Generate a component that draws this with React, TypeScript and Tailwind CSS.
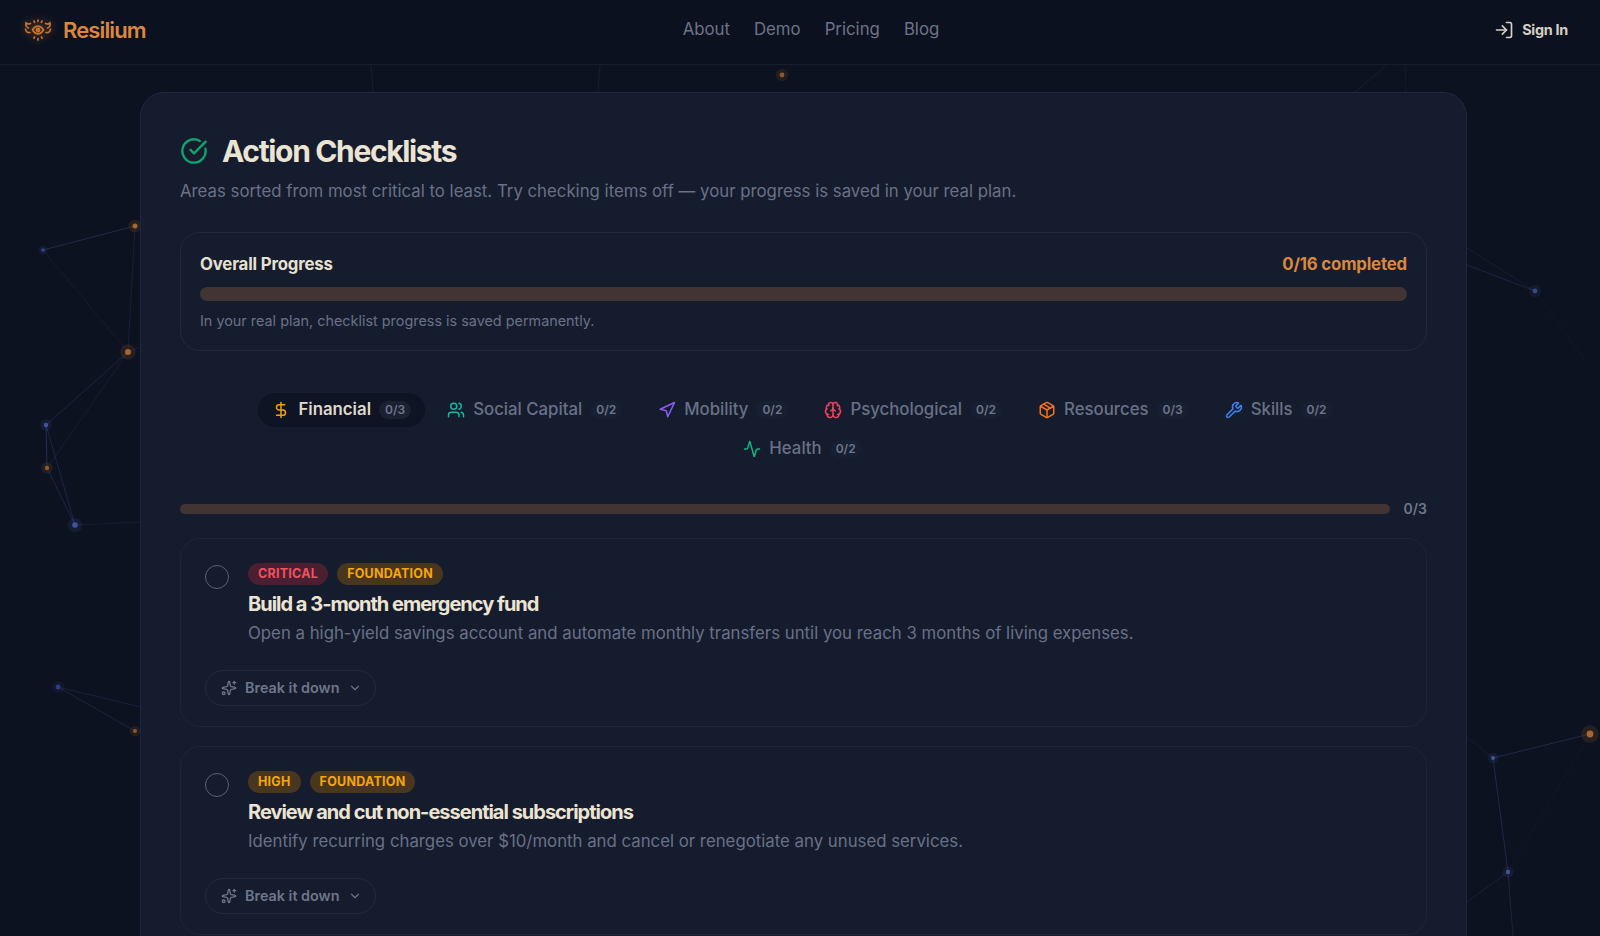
import { Activity, Brain, ChevronDown, CircleCheckBig, DollarSign, LogIn, Navigation, Package, Sparkles, Users, Wrench } from "lucide-react"

const nodes = [
  { x: 135, y: 226, r: 2.5, c: "#c2702f" },
  { x: 43, y: 250, r: 1.8, c: "#3f4f95" },
  { x: 128, y: 352, r: 3, c: "#c2702f" },
  { x: 46, y: 425, r: 2.2, c: "#4a5cab" },
  { x: 47, y: 468, r: 2.2, c: "#a5602c" },
  { x: 75, y: 525, r: 2.8, c: "#4a5cab" },
  { x: 58, y: 687, r: 2.4, c: "#36458c" },
  { x: 135, y: 731, r: 2, c: "#a5602c" },
  { x: 782, y: 75, r: 2.4, c: "#a5602c" },
  { x: 1535, y: 291, r: 2.4, c: "#3f4f95" },
  { x: 1590, y: 734, r: 3.4, c: "#c2702f" },
  { x: 1493, y: 758, r: 2, c: "#4a5cab" },
  { x: 1508, y: 872, r: 2.2, c: "#4a5cab" },
]

const lines = [
  [43, 250, 135, 226, 0.5],
  [135, 226, 128, 352, 0.3],
  [43, 250, 128, 352, 0.25],
  [128, 352, 46, 425, 0.4],
  [128, 352, 47, 468, 0.25],
  [46, 425, 47, 468, 0.6],
  [46, 425, 75, 525, 0.45],
  [47, 468, 75, 525, 0.45],
  [75, 525, 140, 522, 0.25],
  [128, 352, 140, 347, 0.3],
  [58, 687, 140, 707, 0.3],
  [58, 687, 135, 731, 0.4],
  [1493, 758, 1590, 734, 0.5],
  [1493, 758, 1508, 872, 0.5],
  [1508, 872, 1513, 936, 0.4],
  [1508, 872, 1467, 902, 0.3],
  [1493, 758, 1467, 737, 0.2],
  [1508, 872, 1590, 734, 0.12],
  [1467, 265, 1535, 291, 0.4],
  [1467, 248, 1535, 291, 0.25],
  [1535, 291, 1585, 360, 0.12],
  [371, 65, 373, 92, 0.25],
  [600, 65, 598, 92, 0.25],
  [1387, 65, 1355, 92, 0.25],
  [1405, 65, 1406, 92, 0.18],
]

const tabs = [
  { name: "Financial", count: "0/3", icon: DollarSign, color: "text-[#f59e0b]" },
  { name: "Social Capital", count: "0/2", icon: Users, color: "text-[#14b8a6]" },
  { name: "Mobility", count: "0/2", icon: Navigation, color: "text-[#8b5cf6]" },
  { name: "Psychological", count: "0/2", icon: Brain, color: "text-[#f43f5e]" },
  { name: "Resources", count: "0/3", icon: Package, color: "text-[#f97316]" },
  { name: "Skills", count: "0/2", icon: Wrench, color: "text-[#3b82f6]" },
  { name: "Health", count: "0/2", icon: Activity, color: "text-[#10b981]" },
]

const items = [
  {
    badges: [
      { label: "CRITICAL", className: "bg-[#4b1f32] text-[#f0525f]" },
      { label: "FOUNDATION", className: "bg-[#49361f] text-[#f5a70b]" },
    ],
    title: "Build a 3-month emergency fund",
    desc: "Open a high-yield savings account and automate monthly transfers until you reach 3 months of living expenses.",
  },
  {
    badges: [
      { label: "HIGH", className: "bg-[#49361f] text-[#f5a70b]" },
      { label: "FOUNDATION", className: "bg-[#49361f] text-[#f5a70b]" },
    ],
    title: "Review and cut non-essential subscriptions",
    desc: "Identify recurring charges over $10/month and cancel or renegotiate any unused services.",
  },
]

function Network() {
  return (
    <svg className="absolute inset-0" width="1600" height="936" viewBox="0 0 1600 936" fill="none">
      {lines.map((l, i) => (
        <line key={i} x1={l[0]} y1={l[1]} x2={l[2]} y2={l[3]} stroke="#33416f" strokeWidth="1" opacity={l[4]} />
      ))}
      {nodes.map((n, i) => (
        <g key={i}>
          <circle cx={n.x} cy={n.y} r={n.r * 2.6} fill={n.c} opacity="0.14" />
          <circle cx={n.x} cy={n.y} r={n.r} fill={n.c} opacity="0.85" />
        </g>
      ))}
    </svg>
  )
}

function Logo() {
  return (
    <svg className="drop-shadow-[0_0_5px_rgba(220,135,61,0.45)]" width="28" height="22" viewBox="0 0 28 22" fill="none" stroke="#c9702f" strokeWidth="1.7" strokeLinecap="round">
      <circle cx="14" cy="11" r="1.6" fill="#c9702f" />
      <path d="M8.500 11c1.600-2.600 3.400-3.800 5.500-3.800s3.900 1.200 5.500 3.800c-1.600 2.600-3.400 3.800-5.500 3.800s-3.900-1.200-5.500-3.800z" />
      <path d="M6.500 4.500c-1.600.8-3.300.5-4.500-.5-.5 2.500.4 4.300 2.500 5M1.500 10c.2 2.500 2 4 4.500 3.500" />
      <path d="M21.500 4.500c1.600.8 3.300.5 4.500-.5.500 2.500-.4 4.300-2.500 5M26.500 10c-.2 2.500-2 4-4.500 3.500" />
      <path d="M14 1v1.500M10 2l.6 1.300M18 2l-.6 1.300M14 19.500V21M10.500 18l-.5 1.300M17.500 18l.5 1.300" />
    </svg>
  )
}

function ItemCard({ item }: { item: (typeof items)[number] }) {
  return (
    <div className="h-[189px] rounded-[20px] border border-[#1d2538] pt-6 pb-5 pl-6">
      <div className="flex gap-[19px]">
        <div className="mt-[2px] h-6 w-6 shrink-0 rounded-full border border-[#5a6274]" />
        <div className="min-w-0">
          <div className="flex gap-[9px]">
            {item.badges.map((b) => (
              <span key={b.label} className={`flex h-[22px] items-center rounded-full px-[10px] text-[12.5px] font-bold tracking-[0.02em] ${b.className}`}>
                {b.label}
              </span>
            ))}
          </div>
          <h3 className="mt-[6px] text-xl leading-[27px] font-bold tracking-[-0.05em] text-[#ebe4d3]">{item.title}</h3>
          <p className="mt-[2px] text-[16.8px] leading-[27px] text-[#697186]">{item.desc}</p>
        </div>
      </div>
      <button className="mt-[23px] flex h-9 w-[171px] items-center gap-2 rounded-full border border-[#232b3e] pl-[15px] text-[14.4px] font-semibold text-[#6f7689]">
        <Sparkles className="h-4 w-4 shrink-0" />
        Break it down
        <ChevronDown className="h-[14px] w-[14px] shrink-0" />
      </button>
    </div>
  )
}

export default function App() {
  return (
    <div className="relative h-[936px] overflow-hidden bg-[#0c1220] font-['Inter',sans-serif]">
      <Network />

      <header className="relative flex h-[65px] items-center justify-between border-b border-[#171d2c] bg-[#0c111f] pr-8 pb-1 pl-6">
        <div className="flex items-center gap-[11px]">
          <Logo />
          <span className="text-[22px] font-semibold tracking-[-0.04em] text-[#dc873d]">Resilium</span>
        </div>
        <nav className="mr-[18px] flex items-center gap-6 text-[16.8px] text-[#6c7388]">
          <a>About</a>
          <a>Demo</a>
          <a>Pricing</a>
          <a>Blog</a>
        </nav>
        <button className="flex items-center gap-2 text-[14.4px] font-bold tracking-[-0.02em] text-[#d6d0c3]">
          <LogIn className="h-5 w-5" />
          Sign In
        </button>
      </header>

      <main className="relative mt-[27px] ml-[140px] h-[1000px] w-[1327px] rounded-[24px] border border-[#1f2840] bg-[#151c2e] px-[39px] pt-10">
        <div className="flex items-center gap-[14px]">
          <CircleCheckBig className="h-7 w-7 text-[#10a56f]" />
          <h1 className="text-[30px] leading-9 font-bold tracking-[-0.045em] text-[#ebe4d3]">Action Checklists</h1>
        </div>
        <p className="mt-[10px] text-[16.8px] leading-6 text-[#697186]">
          Areas sorted from most critical to least. Try checking items off — your progress is saved in your real plan.
        </p>

        <section className="mt-[29px] h-[119px] rounded-[20px] border border-[#212a3d] px-[19px] pt-5">
          <div className="flex items-center justify-between text-[16.8px] leading-[22px] font-bold tracking-[-0.01em]">
            <span className="text-[#e6e0d1]">Overall Progress</span>
            <span className="text-[#dc873d]">0/16 completed</span>
          </div>
          <div className="mt-[12px] h-[14px] rounded-full bg-[#423432]" />
          <p className="mt-[10px] text-[14.4px] leading-5 text-[#697186]">In your real plan, checklist progress is saved permanently.</p>
        </section>

        <div className="mt-[42px] flex flex-wrap justify-center gap-x-2 gap-y-[5px] pr-[41px] pl-[39px]">
          {tabs.map((t, i) => (
            <div key={t.name} className={`flex h-[34px] items-center gap-2 rounded-full px-[14px] ${i === 0 ? "bg-[#0e1424]" : ""}`}>
              <t.icon className={`h-[18px] w-[18px] ${t.color}`} />
              <span className={`text-[16.8px] ${i === 0 ? "font-semibold text-[#e0dacb]" : "font-medium text-[#697186]"}`}>{t.name}</span>
              <span className={`rounded-full px-[6px] py-[1px] text-xs font-semibold ${i === 0 ? "bg-[#1a2132] text-[#6f7689]" : "bg-[#172032] text-[#6f7689]"}`}>{t.count}</span>
            </div>
          ))}
        </div>

        <div className="mt-[33px] flex items-center gap-[14px]">
          <div className="h-[10px] flex-1 rounded-full bg-[#423432]" />
          <span className="text-sm font-semibold text-[#6f7689]">0/3</span>
        </div>

        <div className="mt-[19px] flex flex-col gap-[19px]">
          {items.map((item) => (
            <ItemCard key={item.title} item={item} />
          ))}
        </div>
      </main>
    </div>
  )
}
